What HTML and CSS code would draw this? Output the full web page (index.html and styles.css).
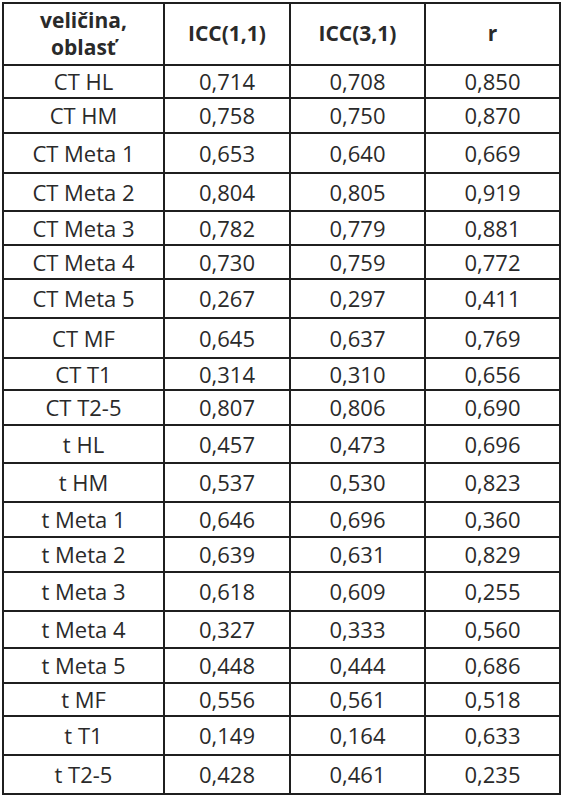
FILE: index.html
```html
<!DOCTYPE html>
<html lang="sk">
<head>
    <meta charset="UTF-8">
    <meta name="viewport" content="width=device-width, initial-scale=1.0">
    <title>ICC a korelácia</title>
    <link rel="stylesheet" href="styles.css">
</head>
<body>
    <!-- Tabuľka zhody merania -->
    <table class="tab-icc">
        <colgroup>
            <col class="col-nazov">
            <col class="col-hodnota1">
            <col class="col-hodnota2">
            <col class="col-hodnota3">
        </colgroup>
        <thead>
            <tr class="r-head">
                <th>veličina,<br>oblasť</th>
                <th>ICC(1,1)</th>
                <th>ICC(3,1)</th>
                <th>r</th>
            </tr>
        </thead>
        <tbody>
            <tr class="h33"><td>CT HL</td><td>0,714</td><td>0,708</td><td>0,850</td></tr>
            <tr class="h35"><td>CT HM</td><td>0,758</td><td>0,750</td><td>0,870</td></tr>
            <tr class="h40"><td>CT Meta 1</td><td>0,653</td><td>0,640</td><td>0,669</td></tr>
            <tr class="h38"><td>CT Meta 2</td><td>0,804</td><td>0,805</td><td>0,919</td></tr>
            <tr class="h34"><td>CT Meta 3</td><td>0,782</td><td>0,779</td><td>0,881</td></tr>
            <tr class="h34"><td>CT Meta 4</td><td>0,730</td><td>0,759</td><td>0,772</td></tr>
            <tr class="h39"><td>CT Meta 5</td><td>0,267</td><td>0,297</td><td>0,411</td></tr>
            <tr class="h40"><td>CT MF</td><td>0,645</td><td>0,637</td><td>0,769</td></tr>
            <tr class="h32"><td>CT T1</td><td>0,314</td><td>0,310</td><td>0,656</td></tr>
            <tr class="h35"><td>CT T2-5</td><td>0,807</td><td>0,806</td><td>0,690</td></tr>
            <tr class="h38"><td>t HL</td><td>0,457</td><td>0,473</td><td>0,696</td></tr>
            <tr class="h39"><td>t HM</td><td>0,537</td><td>0,530</td><td>0,823</td></tr>
            <tr class="h35"><td>t Meta 1</td><td>0,646</td><td>0,696</td><td>0,360</td></tr>
            <tr class="h35"><td>t Meta 2</td><td>0,639</td><td>0,631</td><td>0,829</td></tr>
            <tr class="h39"><td>t Meta 3</td><td>0,618</td><td>0,609</td><td>0,255</td></tr>
            <tr class="h37"><td>t Meta 4</td><td>0,327</td><td>0,333</td><td>0,560</td></tr>
            <tr class="h35"><td>t Meta 5</td><td>0,448</td><td>0,444</td><td>0,686</td></tr>
            <tr class="h33"><td>t MF</td><td>0,556</td><td>0,561</td><td>0,518</td></tr>
            <tr class="h39"><td>t T1</td><td>0,149</td><td>0,164</td><td>0,633</td></tr>
            <tr class="h39"><td>t T2-5</td><td>0,428</td><td>0,461</td><td>0,235</td></tr>
        </tbody>
    </table>
</body>
</html>
```

FILE: styles.css
```css
/* Základ */
body {
    margin: 0;
    padding: 2px 0 0 2px;
    background-color: #ffffff;
    font-family: "Open Sans", "Liberation Sans", sans-serif;
    color: #2a2a2a;
}

/* Tabuľka */
.tab-icc {
    border-collapse: collapse;
    border: 2px solid #1f1f1f;
    table-layout: fixed;
    width: 557px;
}

.col-nazov { width: 161px; }
.col-hodnota1 { width: 126px; }
.col-hodnota2 { width: 135px; }
.col-hodnota3 { width: 135px; }

.tab-icc th,
.tab-icc td {
    border: 2px solid #1f1f1f;
    padding: 0;
    text-align: center;
    vertical-align: middle;
    font-size: 22px;
    line-height: 1.2;
}

.tab-icc th {
    font-weight: bold;
    font-size: 21px;
    line-height: 1.3;
}

/* Výšky riadkov */
.r-head { height: 62px; }
.h32 { height: 32px; }
.h33 { height: 33px; }
.h34 { height: 34px; }
.h35 { height: 35px; }
.h37 { height: 37px; }
.h38 { height: 38px; }
.h39 { height: 39px; }
.h40 { height: 40px; }
```
